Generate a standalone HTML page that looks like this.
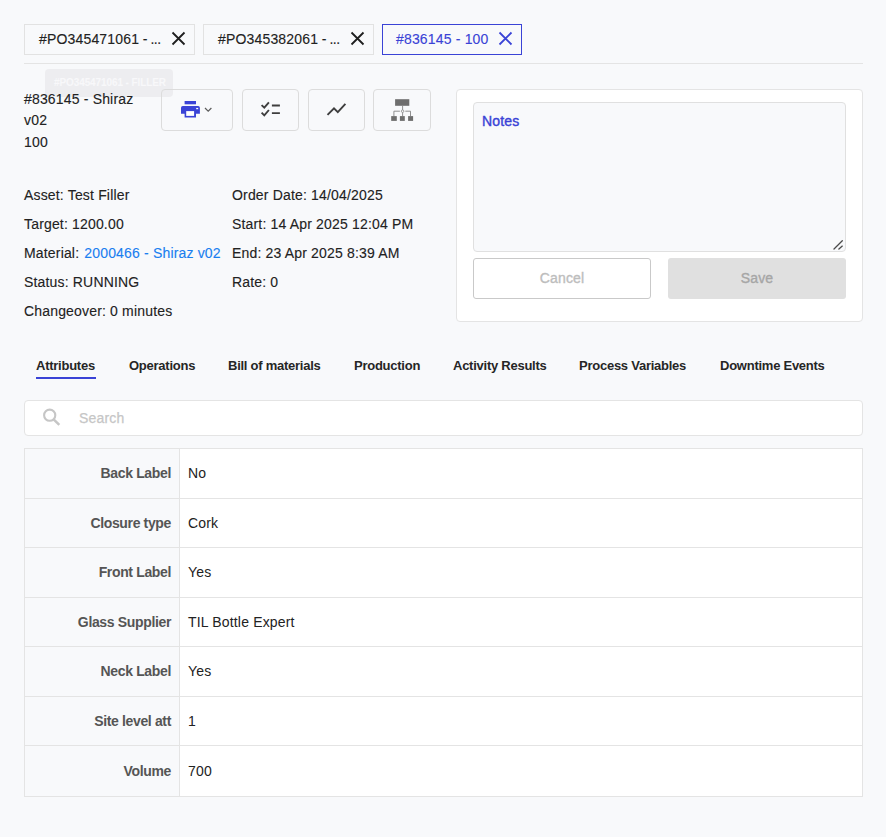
<!DOCTYPE html>
<html><head><meta charset="utf-8">
<style>
html,body{margin:0;padding:0;}
body{width:886px;height:837px;background:#f8f9fb;position:relative;overflow:hidden;font-family:"Liberation Sans",sans-serif;color:#222;}
.a{position:absolute;box-sizing:border-box;}
.t{position:absolute;white-space:nowrap;font-size:14px;line-height:16px;letter-spacing:0.17px;-webkit-text-stroke:0.12px currentColor;}
.chip{position:absolute;top:24px;height:31px;border:1px solid #e2e2e2;box-sizing:border-box;}
.btn{position:absolute;top:89px;height:42px;border:1px solid #dcdcdc;border-radius:4px;box-sizing:border-box;}
.tab{position:absolute;top:358px;font-size:13px;font-weight:700;line-height:16px;white-space:nowrap;color:#262626;letter-spacing:-0.25px;}
.row{position:absolute;left:24px;width:839px;border-bottom:1px solid #e4e4e4;box-sizing:border-box;}
.lab{position:absolute;right:715px;letter-spacing:-0.35px;font-size:14px;font-weight:700;color:#555;white-space:nowrap;line-height:16px;}
.val{position:absolute;left:188px;letter-spacing:0.17px;font-size:14px;color:#222;white-space:nowrap;line-height:16px;}
</style></head><body>

<!-- top chips -->
<div class="chip" style="left:24px;width:171px;"></div>
<div class="t" style="left:39px;top:31px;">#PO345471061<span style="letter-spacing:-0.4px"> - ...</span></div>
<svg class="a" style="left:171px;top:31px;" width="15" height="15" viewBox="0 0 15 15"><path d="M1.5 1.5L13.5 13.5M13.5 1.5L1.5 13.5" stroke="#1f1f1f" stroke-width="1.8" fill="none"/></svg>

<div class="chip" style="left:203px;width:171px;"></div>
<div class="t" style="left:218px;top:31px;">#PO345382061<span style="letter-spacing:-0.4px"> - ...</span></div>
<svg class="a" style="left:350px;top:31px;" width="15" height="15" viewBox="0 0 15 15"><path d="M1.5 1.5L13.5 13.5M13.5 1.5L1.5 13.5" stroke="#1f1f1f" stroke-width="1.8" fill="none"/></svg>

<div class="chip" style="left:382px;width:140px;border-color:#3a43d6;"></div>
<div class="t" style="left:396px;top:31px;color:#3a43d6;">#836145 - 100</div>
<svg class="a" style="left:498px;top:31px;" width="15" height="15" viewBox="0 0 15 15"><path d="M1.5 1.5L13.5 13.5M13.5 1.5L1.5 13.5" stroke="#3a43d6" stroke-width="1.8" fill="none"/></svg>

<div class="a" style="left:24px;top:63px;width:839px;height:1px;background:#e4e4e4;"></div>

<!-- tooltip ghost -->
<div class="a" style="left:45px;top:69px;width:128px;height:28px;background:#ededf0;border-radius:4px;"></div>
<div class="t" style="left:54px;top:75px;font-size:10px;font-weight:700;color:#f8f8fa;letter-spacing:-0.1px;">#PO345471061 - FILLER</div>

<!-- title -->
<div class="t" style="left:24px;top:91px;">#836145 - Shiraz</div>
<div class="t" style="left:24px;top:112px;">v02</div>
<div class="t" style="left:24px;top:134px;">100</div>

<!-- buttons -->
<div class="btn" style="left:161px;width:72px;"></div>
<svg class="a" style="left:176px;top:96px;" width="40" height="26" viewBox="0 0 40 26">
  <rect x="8.6" y="5" width="11.4" height="3.3" fill="#3a43d6"/>
  <path d="M6.7 9.9 H22.1 Q23.9 9.9 23.9 11.7 V17.8 H20 V21.6 H8.6 V17.8 H5 V11.7 Q5 9.9 6.8 9.9Z" fill="#3a43d6"/>
  <rect x="10.2" y="15.1" width="7.9" height="4.8" fill="#fff"/>
  <rect x="20.2" y="11.9" width="2" height="1.3" fill="#fff"/>
  <path d="M29 12 L32.2 15.2 L35.4 12" stroke="#5c5c5c" stroke-width="1.2" fill="none"/>
</svg>

<div class="btn" style="left:242px;width:57px;"></div>
<svg class="a" style="left:258px;top:98px;" width="26" height="24" viewBox="0 0 26 24">
  <path d="M3.6 7.1 L6.3 9.7 L10.9 4.4" stroke="#3e3e3e" stroke-width="1.9" fill="none"/>
  <path d="M3.6 14.6 L6.3 17.3 L10.9 12" stroke="#3e3e3e" stroke-width="1.9" fill="none"/>
  <path d="M13.9 7.5 H21.9 M13.9 15.1 H21.9" stroke="#3e3e3e" stroke-width="1.9" fill="none"/>
</svg>

<div class="btn" style="left:308px;width:57px;"></div>
<svg class="a" style="left:322px;top:98px;" width="28" height="22" viewBox="0 0 28 22">
  <path d="M5.5 16.9 L12 10.3 L15.8 14.1 L23.4 5.8" stroke="#3e3e3e" stroke-width="1.9" fill="none"/>
</svg>

<div class="btn" style="left:373px;width:58px;"></div>
<svg class="a" style="left:386px;top:95px;" width="32" height="30" viewBox="0 0 32 30">
  <rect x="9.1" y="4.2" width="14.2" height="6.6" fill="#6e6e6e"/>
  <path d="M16.6 10.8 V14.9 M16.6 17.5 V21.1 M7.9 21.1 V16.2 H13.9 M19.3 16.2 H24.5 V21.1" stroke="#858585" stroke-width="0.9" fill="none"/>
  <circle cx="16.6" cy="16.2" r="1.25" stroke="#858585" stroke-width="0.8" fill="none"/>
  <rect x="5.2" y="21.1" width="5.6" height="4.8" fill="#6e6e6e"/>
  <rect x="13.9" y="21.1" width="4.9" height="4.8" fill="#6e6e6e"/>
  <rect x="22.1" y="21.1" width="5" height="4.8" fill="#6e6e6e"/>
</svg>

<!-- info -->
<div class="t" style="left:24px;top:187px;">Asset: Test Filler</div>
<div class="t" style="left:24px;top:216px;">Target: 1200.00</div>
<div class="t" style="left:24px;top:245px;">Material: <span style="color:#1a7ff0;padding-left:1px;">2000466 - Shiraz v02</span></div>
<div class="t" style="left:24px;top:274px;">Status: RUNNING</div>
<div class="t" style="left:24px;top:303px;">Changeover: 0 minutes</div>

<div class="t" style="left:232px;top:187px;">Order Date: 14/04/2025</div>
<div class="t" style="left:232px;top:216px;">Start: 14 Apr 2025 12:04 PM</div>
<div class="t" style="left:232px;top:245px;">End: 23 Apr 2025 8:39 AM</div>
<div class="t" style="left:232px;top:274px;">Rate: 0</div>

<!-- notes panel -->
<div class="a" style="left:456px;top:89px;width:407px;height:233px;background:#fff;border:1px solid #e4e4e4;border-radius:4px;"></div>
<div class="a" style="left:473px;top:102px;width:373px;height:150px;background:#f8f9fb;border:1px solid #e0e0e0;border-radius:4px;"></div>
<div class="t" style="left:482px;top:113px;color:#3a43d6;-webkit-text-stroke:0.4px #3a43d6;">Notes</div>
<svg class="a" style="left:831px;top:238px;" width="12" height="12" viewBox="0 0 12 12"><path d="M3 11 L11.3 2.8 M7.9 11 L11.3 8.1" stroke="#4a4a4a" stroke-width="1.3" stroke-linecap="round"/></svg>
<div class="a" style="left:473px;top:258px;width:178px;height:41px;border:1px solid #c9c9c9;border-radius:3px;background:#fff;"></div>
<div class="t" style="left:473px;top:270px;width:178px;text-align:center;color:#bdbdbd;-webkit-text-stroke:0.35px #bdbdbd;">Cancel</div>
<div class="a" style="left:668px;top:258px;width:178px;height:41px;border-radius:3px;background:#e0e0e0;"></div>
<div class="t" style="left:668px;top:270px;width:178px;text-align:center;color:#a6a6a6;-webkit-text-stroke:0.35px #a6a6a6;">Save</div>

<!-- tabs -->
<div class="tab" style="left:36px;">Attributes</div>
<div class="a" style="left:36px;top:377px;width:60px;height:2px;background:#3a43d6;"></div>
<div class="tab" style="left:129px;">Operations</div>
<div class="tab" style="left:228px;">Bill of materials</div>
<div class="tab" style="left:354px;">Production</div>
<div class="tab" style="left:453px;">Activity Results</div>
<div class="tab" style="left:579px;">Process Variables</div>
<div class="tab" style="left:720px;">Downtime Events</div>

<!-- search -->
<div class="a" style="left:24px;top:400px;width:839px;height:36px;background:#fff;border:1px solid #e4e4e4;border-radius:4px;"></div>
<svg class="a" style="left:40px;top:406px;" width="24" height="24" viewBox="0 0 24 24"><circle cx="9.7" cy="9.2" r="5.6" stroke="#c6c6c6" stroke-width="2.1" fill="none"/><path d="M13.6 13.3 L19.3 18.9" stroke="#c6c6c6" stroke-width="2.5" fill="none"/></svg>
<div class="t" style="left:79px;top:410px;color:#c6c6c6;-webkit-text-stroke:0.25px #c6c6c6;">Search</div>

<!-- table -->
<div class="a" style="left:24px;top:448px;width:839px;height:349px;background:#fff;border:1px solid #e4e4e4;"></div>
<div class="a" style="left:25px;top:449px;width:154px;height:347px;background:#f8f9fb;"></div>
<div class="a" style="left:179px;top:449px;width:1px;height:347px;background:#e4e4e4;"></div>
<div class="a" style="left:25px;top:498px;width:837px;height:1px;background:#e4e4e4;"></div>
<div class="a" style="left:25px;top:547px;width:837px;height:1px;background:#e4e4e4;"></div>
<div class="a" style="left:25px;top:597px;width:837px;height:1px;background:#e4e4e4;"></div>
<div class="a" style="left:25px;top:646px;width:837px;height:1px;background:#e4e4e4;"></div>
<div class="a" style="left:25px;top:696px;width:837px;height:1px;background:#e4e4e4;"></div>
<div class="a" style="left:25px;top:745px;width:837px;height:1px;background:#e4e4e4;"></div>

<div class="lab" style="top:465px;">Back Label</div><div class="val" style="top:465px;">No</div>
<div class="lab" style="top:515px;">Closure type</div><div class="val" style="top:515px;">Cork</div>
<div class="lab" style="top:564px;">Front Label</div><div class="val" style="top:564px;">Yes</div>
<div class="lab" style="top:614px;">Glass Supplier</div><div class="val" style="top:614px;">TIL Bottle Expert</div>
<div class="lab" style="top:663px;">Neck Label</div><div class="val" style="top:663px;">Yes</div>
<div class="lab" style="top:713px;">Site level att</div><div class="val" style="top:713px;">1</div>
<div class="lab" style="top:763px;">Volume</div><div class="val" style="top:763px;">700</div>

</body></html>
